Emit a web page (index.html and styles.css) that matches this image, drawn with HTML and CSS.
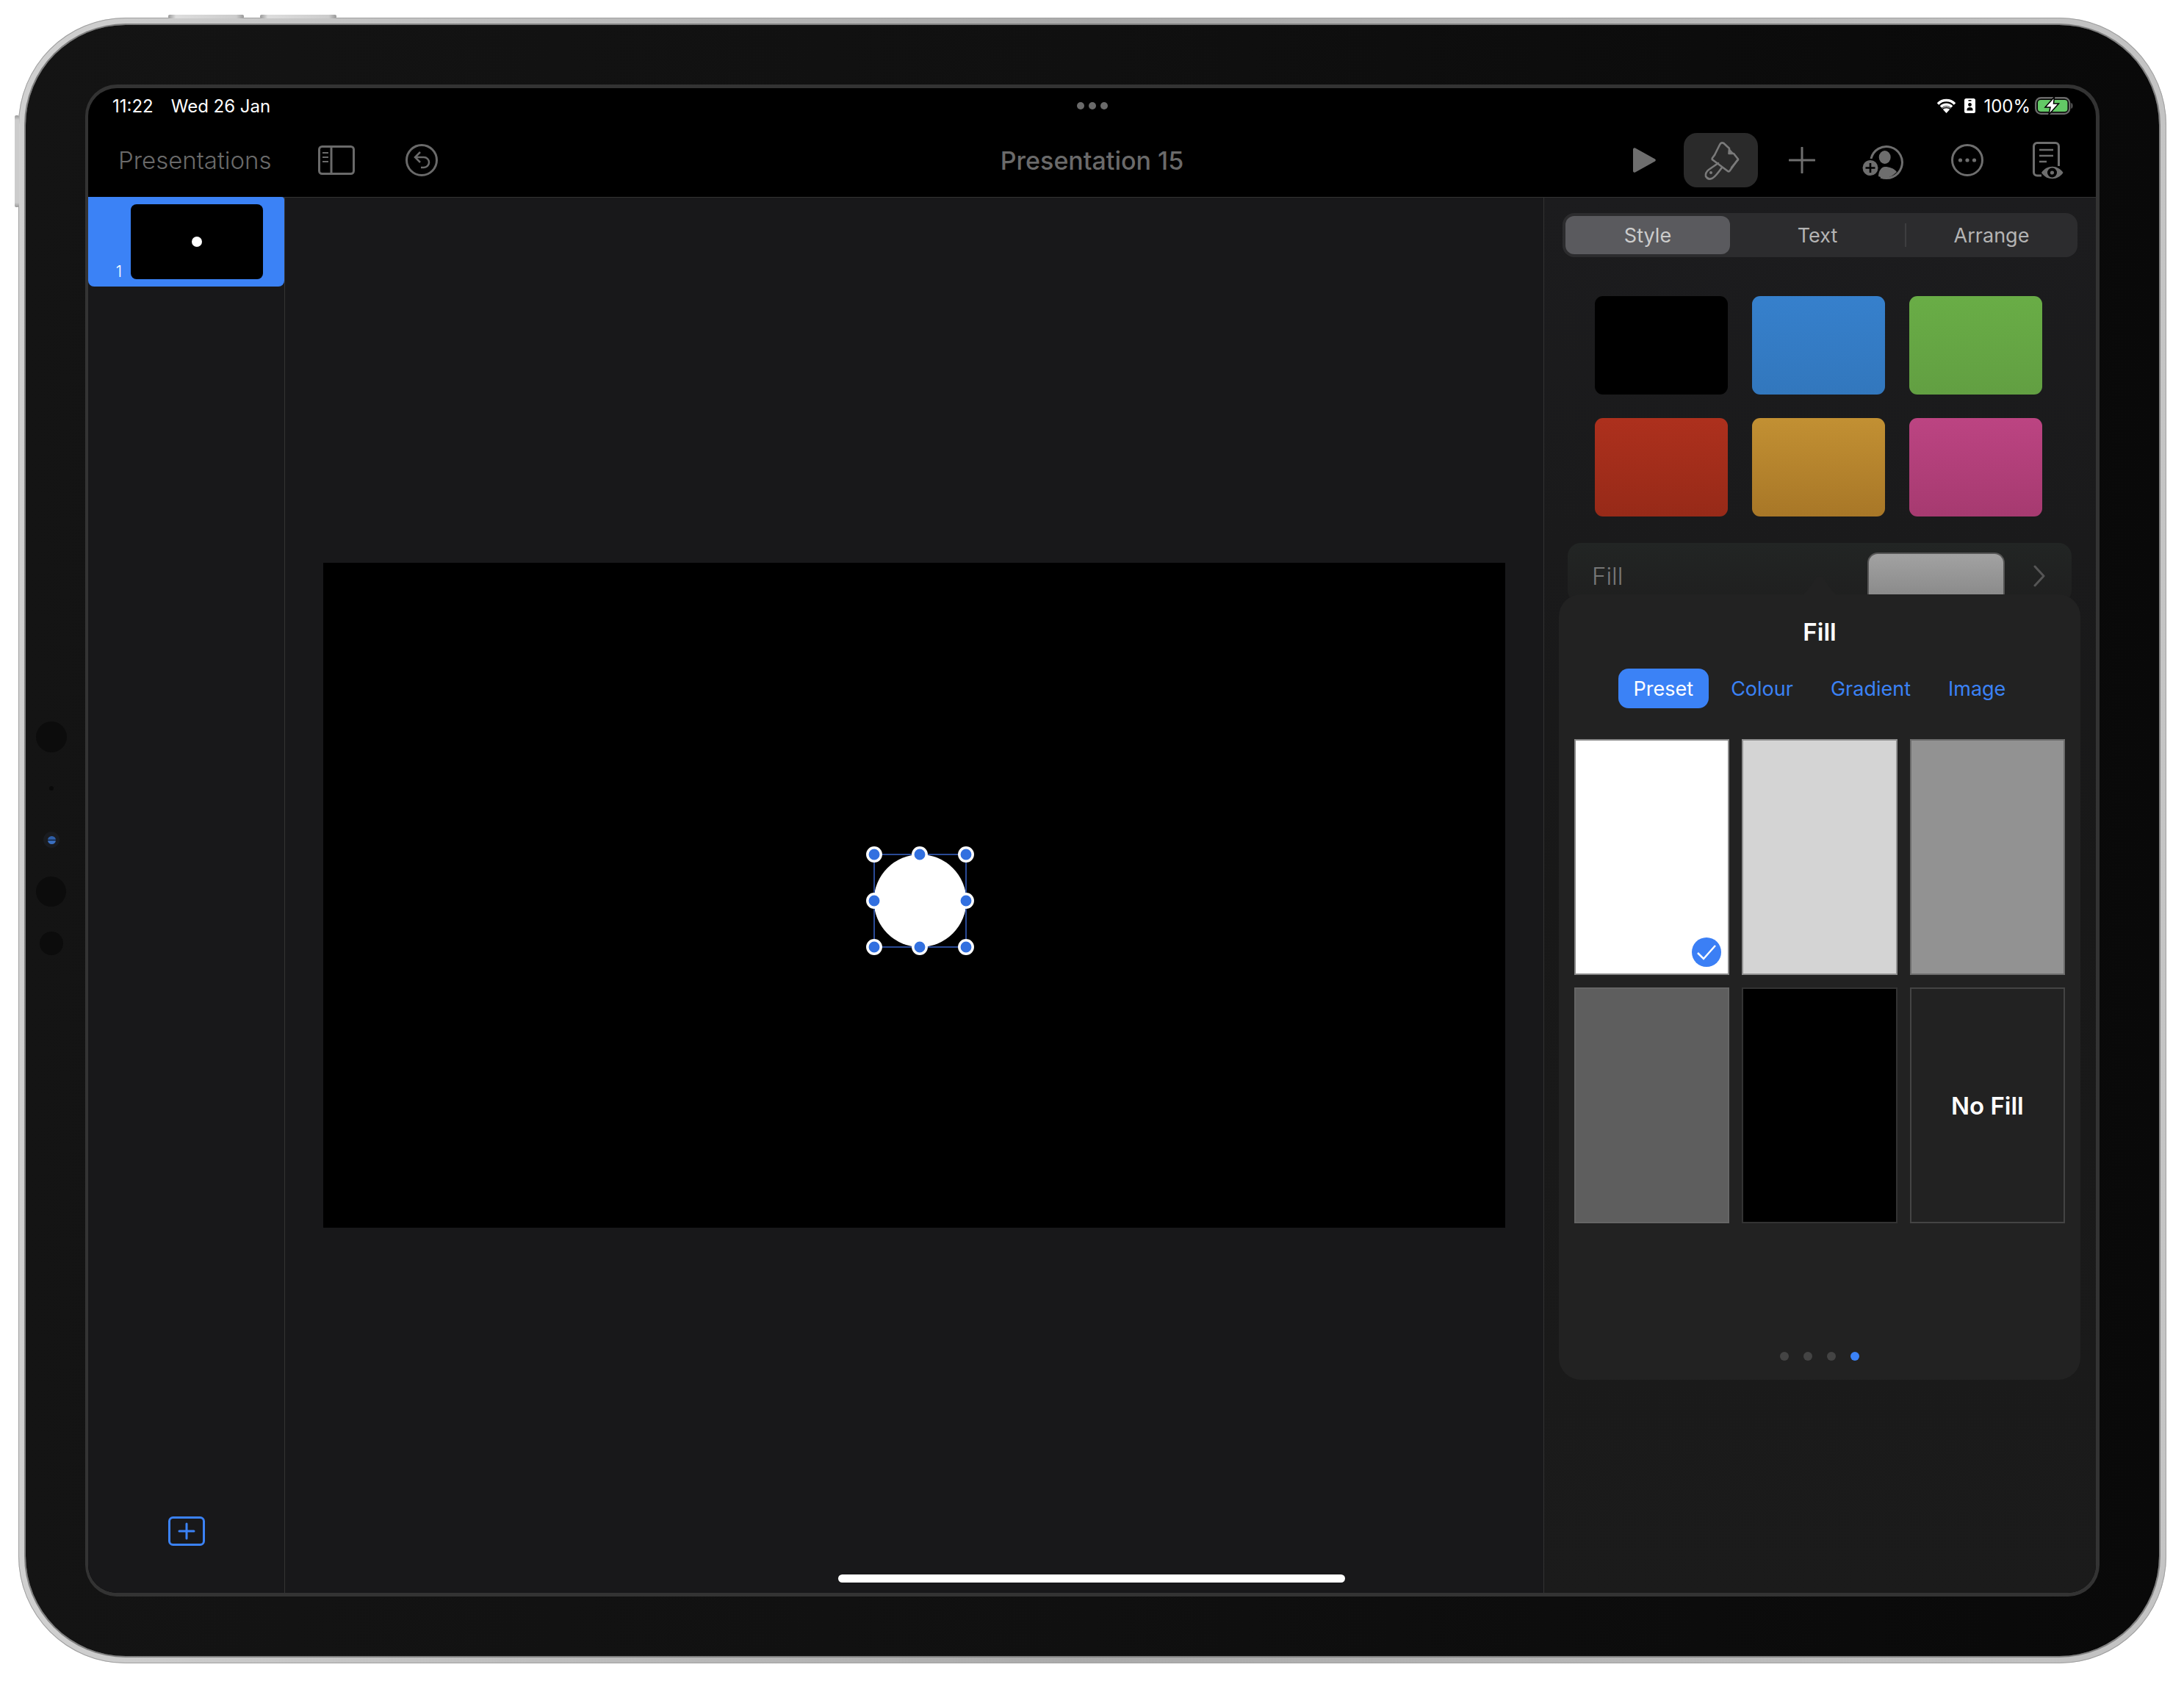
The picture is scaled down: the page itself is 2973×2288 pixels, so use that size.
FILE: index.html
```html
<!DOCTYPE html>
<html lang="en">
<head>
    <meta charset="UTF-8">
    <title>Presentation 15</title>
    <link rel="stylesheet" href="styles.css">
</head>
<body>
    <div class="device">
        <span class="hw-btn hw-top-a"></span>
        <span class="hw-btn hw-top-b"></span>
        <span class="hw-btn hw-side"></span>

        <div class="bezel">
            <span class="sensor sensor-a"></span>
            <span class="sensor sensor-mic"></span>
            <span class="sensor sensor-cam"><i></i></span>
            <span class="sensor sensor-b"></span>
            <span class="sensor sensor-c"></span>

            <div class="screen">
                <!-- status bar -->
                <div class="status">
                    <div class="status-left"><span>11:22</span><span>Wed 26 Jan</span></div>
                    <div class="status-dots"><i></i><i></i><i></i></div>
                    <div class="status-right">
                        <svg width="27" height="20" viewBox="0 0 27 20">
                            <path d="M2 7.5a16 16 0 0 1 23 0M6 11.5a10.5 10.5 0 0 1 15 0" fill="none" stroke="#fff" stroke-width="3.5"/>
                            <path d="M13.5 20l-6-6.6a8 8 0 0 1 12 0z" fill="#fff"/>
                            <path d="M7.5 13a8.5 8.5 0 0 1 12 0" fill="none" stroke="#000" stroke-width="1.5" transform="translate(0 2)"/>
                        </svg>
                        <svg class="ic-lock" width="15" height="20" viewBox="0 0 15 20">
                            <rect width="15" height="20" rx="2.5" fill="#fff"/>
                            <rect x="5.5" y="2" width="4" height="1.6" fill="#000"/>
                            <circle cx="7.5" cy="8.5" r="2.4" fill="#000"/>
                            <path d="M3.5 16.5v-1.5c0-2 2-3 4-3s4 1 4 3v1.5z" fill="#000"/>
                        </svg>
                        <span class="batt-text">100%</span>
                        <svg width="53" height="26" viewBox="0 0 53 26">
                            <rect x="1.2" y="2.2" width="46" height="21.6" rx="7" fill="none" stroke="#6a6a6a" stroke-width="2.4"/>
                            <rect x="4" y="5" width="40.5" height="16" rx="4" fill="#63c966"/>
                            <path d="M49.5 9c2.5 .6 2.5 7.4 0 8z" fill="#6a6a6a"/>
                            <path d="M26.5 1L14 15h7l-2 10 13.5-15H25.5z" fill="#fff" stroke="#000" stroke-width="1.5"/>
                        </svg>
                    </div>
                </div>

                <!-- toolbar -->
                <div class="toolbar">
                    <div class="toolbar-left">
                        <span class="back-label">Presentations</span>
                        <svg class="ic-sidebar" width="50" height="40" viewBox="0 0 50 40">
                            <rect x="1.5" y="1.5" width="47" height="37" rx="4" fill="none" stroke="#6a6a6a" stroke-width="3"/>
                            <path d="M18 2v36" stroke="#6a6a6a" stroke-width="3"/>
                            <path d="M6 10h8M6 16h8M6 22h8" stroke="#6a6a6a" stroke-width="2"/>
                        </svg>
                        <svg class="ic-undo" width="44" height="44" viewBox="0 0 44 44">
                            <circle cx="22" cy="22" r="20.5" fill="none" stroke="#6a6a6a" stroke-width="3"/>
                            <path d="M20 11l-7 7 7 7M13 18h12a7 7 0 0 1 0 14h-4" fill="none" stroke="#6a6a6a" stroke-width="2.5"/>
                        </svg>
                    </div>
                    <div class="doc-title">Presentation 15</div>
                    <div class="toolbar-right">
                        <svg class="ic-play" width="32" height="36" viewBox="0 0 32 36">
                            <path d="M3 1.5L30 16.5a2 2 0 0 1 0 3L3 34.5a2 2 0 0 1-3-1.5V3a2 2 0 0 1 3-1.5z" fill="#6e6e6e"/>
                        </svg>
                        <div class="brush-btn">
                            <svg width="66" height="66" viewBox="0 0 66 66" fill="none" stroke="#7a7a7a" stroke-width="2.6" stroke-linejoin="round" stroke-linecap="round">
                                <path d="M24 26L31 12Q33 8 36.5 10L44 17 43.5 24 50 24 55.5 31Q56.5 32 55.5 33L47 43"/>
                                <path d="M44 17l6.5 7h-7z" fill="#7a7a7a" stroke="none"/>
                                <path d="M24 26L21 30Q20 32 22 33L42 48Q44 49 45 47L55 33"/>
                                <path d="M29 37L16 46Q11 50 12 55 15 60 20 58 24 57 34 43"/>
                                <circle cx="19" cy="50" r="2" fill="#7a7a7a" stroke="none"/>
                            </svg>
                        </div>
                        <svg class="ic-plus" width="36" height="36" viewBox="0 0 36 36">
                            <path d="M18 1v34M1 18h34" stroke="#6e6e6e" stroke-width="3" stroke-linecap="round"/>
                        </svg>
                        <svg class="ic-person" width="65" height="56" viewBox="0 0 65 56">
                            <path d="M17 26A21.5 21.5 0 1 1 30 51" fill="none" stroke="#6e6e6e" stroke-width="3"/>
                            <ellipse cx="35.7" cy="24" rx="8" ry="9" fill="#6e6e6e"/>
                            <path d="M27 50c0-7 4-13 9-13 6 0 12 2 16 7-5 5-10 8-16 8-3 0-6-1-9-2z" fill="#6e6e6e"/>
                            <circle cx="16" cy="38.5" r="10.5" fill="#6e6e6e"/>
                            <path d="M16 32v13M9.5 38.5h13" stroke="#000" stroke-width="2.6"/>
                        </svg>
                        <svg class="ic-more" width="44" height="44" viewBox="0 0 44 44">
                            <circle cx="22" cy="22" r="20.5" fill="none" stroke="#6e6e6e" stroke-width="3"/>
                            <circle cx="12.5" cy="22" r="2.6" fill="#6e6e6e"/>
                            <circle cx="22" cy="22" r="2.6" fill="#6e6e6e"/>
                            <circle cx="31.5" cy="22" r="2.6" fill="#6e6e6e"/>
                        </svg>
                        <svg class="ic-doc" width="56" height="60" viewBox="0 0 56 60">
                            <path d="M19 51H13a4.5 4.5 0 0 1-4.5-4.5V11A4.5 4.5 0 0 1 13 6.5H38A4.5 4.5 0 0 1 42.5 11V38" fill="none" stroke="#6e6e6e" stroke-width="3"/>
                            <path d="M16 16h19M16 24h19M16 32h10" stroke="#6e6e6e" stroke-width="2.6"/>
                            <path d="M19 47c7-11 22-11 29.5 0-7.5 11-22.5 11-29.5 0z" fill="#6e6e6e"/>
                            <circle cx="33.5" cy="47" r="6.5" fill="#000"/>
                            <circle cx="33.5" cy="47" r="2.6" fill="#6e6e6e"/>
                        </svg>
                    </div>
                </div>

                <div class="workspace">
                    <!-- slide navigator -->
                    <div class="navigator">
                        <div class="thumb-row">
                            <span class="thumb-num">1</span>
                            <div class="thumb"><i></i></div>
                        </div>
                        <svg class="add-slide" width="50" height="40" viewBox="0 0 50 40">
                            <rect x="1.5" y="1.5" width="47" height="37" rx="5" fill="none" stroke="#3b82f6" stroke-width="3"/>
                            <path d="M25 10v20M15 20h20" stroke="#3b82f6" stroke-width="3" stroke-linecap="round"/>
                        </svg>
                    </div>

                    <!-- slide canvas -->
                    <div class="canvas">
                        <div class="slide">
                            <svg class="shape" width="147" height="148" viewBox="0 0 147 148">
                                <circle cx="73.5" cy="74" r="63" fill="#fff"/>
                                <rect x="11" y="11" width="125" height="126" fill="none" stroke="#2a4a96" stroke-width="2"/>
                                <g fill="#3270e0" stroke="#fff" stroke-width="3.5">
                                    <circle cx="11" cy="11" r="9.2"/>
                                    <circle cx="73" cy="11" r="9.2"/>
                                    <circle cx="136" cy="11" r="9.2"/>
                                    <circle cx="11" cy="74" r="9.2"/>
                                    <circle cx="136" cy="74" r="9.2"/>
                                    <circle cx="11" cy="137" r="9.2"/>
                                    <circle cx="73" cy="137" r="9.2"/>
                                    <circle cx="136" cy="137" r="9.2"/>
                                </g>
                            </svg>
                        </div>
                    </div>

                    <!-- format inspector -->
                    <div class="inspector">
                        <div class="segmented">
                            <div class="seg seg-on">Style</div>
                            <div class="seg seg-text">Text</div>
                            <div class="seg-sep"></div>
                            <div class="seg seg-arrange">Arrange</div>
                        </div>

                        <div class="styles">
                            <div class="style-swatch sw-black"></div>
                            <div class="style-swatch sw-blue"></div>
                            <div class="style-swatch sw-green"></div>
                            <div class="style-swatch sw-red"></div>
                            <div class="style-swatch sw-orange"></div>
                            <div class="style-swatch sw-pink"></div>
                        </div>

                        <div class="fill-row">
                            <span class="fill-label">Fill</span>
                            <div class="fill-preview"></div>
                            <svg class="fill-chevron" width="16" height="30" viewBox="0 0 16 30">
                                <path d="M2 2l12 13L2 28" fill="none" stroke="#555" stroke-width="3" stroke-linecap="round" stroke-linejoin="round"/>
                            </svg>
                        </div>

                        <div class="popover">
                            <svg class="popover-arrow" width="60" height="26" viewBox="0 0 60 26">
                                <path d="M0 26c6 0 9-1 12-5L25 3c3-4 7-4 10 0l13 18c3 4 6 5 12 5z" fill="#222"/>
                            </svg>
                            <div class="popover-title">Fill</div>
                            <div class="tabs">
                                <span class="tab tab-on">Preset</span>
                                <span class="tab">Colour</span>
                                <span class="tab">Gradient</span>
                                <span class="tab">Image</span>
                            </div>
                            <div class="presets">
                                <div class="preset p-white">
                                    <svg class="check" width="40" height="40" viewBox="0 0 40 40">
                                        <circle cx="20" cy="20" r="20" fill="#3b7ff5"/>
                                        <path d="M8 21l8 8 16-18" fill="none" stroke="#fff" stroke-width="2.5"/>
                                    </svg>
                                </div>
                                <div class="preset p-light"></div>
                                <div class="preset p-mid"></div>
                                <div class="preset p-dark"></div>
                                <div class="preset p-black"></div>
                                <div class="preset p-none">No Fill</div>
                            </div>
                            <div class="pager"><i></i><i></i><i></i><i class="on"></i></div>
                        </div>
                    </div>
                </div>

                <div class="home-bar"></div>
            </div>
        </div>
    </div>
</body>
</html>
```

FILE: styles.css
```css
* {
    box-sizing: border-box;
}

body {
    margin: 0;
    width: 2973px;
    height: 2288px;
    background-color: #fff;
    font-family: Inter, 'Liberation Sans', sans-serif;
    overflow: hidden;
}

/* device frame */
.device {
    position: relative;
    width: 2924px;
    height: 2240px;
    margin: 24px 0 0 25px;
    padding: 10px;
    border-radius: 146px;
    background: linear-gradient(90deg, #d0d0d0, #aaa 50%, #c4c4c4);
    box-shadow: inset 0 0 0 1px #a0a0a0;
}

.hw-btn {
    position: absolute;
    background: linear-gradient(90deg, #999, #ddd 10%, #ccc 90%, #999);
    border-radius: 2px;
}

.hw-top-a {
    left: 204px;
    top: -4px;
    width: 103px;
    height: 5px;
}

.hw-top-b {
    left: 329px;
    top: -4px;
    width: 104px;
    height: 5px;
}

.hw-side {
    left: -5px;
    top: 133px;
    width: 6px;
    height: 125px;
    background: linear-gradient(180deg, #999, #ccc 5%, #ccc 95%, #999);
}

.bezel {
    position: relative;
    height: 100%;
    padding: 81px;
    border-radius: 136px;
    background: linear-gradient(90deg, #141414, #101010 50%, #090909);
    box-shadow: 0 0 0 2px #808080;
}

.sensor {
    position: absolute;
    border-radius: 50%;
    background-color: #0c0c0c;
}

.sensor-a {
    left: 14px;
    top: 948px;
    width: 42px;
    height: 42px;
}

.sensor-mic {
    left: 32px;
    top: 1036px;
    width: 6px;
    height: 6px;
    background-color: #0a0a0a;
}

.sensor-cam {
    left: 24px;
    top: 1098px;
    width: 22px;
    height: 22px;
    background-color: #1a1c20;
    display: flex;
    align-items: center;
    justify-content: center;
}

.sensor-cam i {
    width: 11px;
    height: 11px;
    border-radius: 50%;
    background: linear-gradient(180deg, #2f5fa8 40%, #0d1a30 45%, #0d1a30 55%, #3a6fc0 60%);
}

.sensor-b {
    left: 14px;
    top: 1159px;
    width: 41px;
    height: 41px;
}

.sensor-c {
    left: 19px;
    top: 1234px;
    width: 32px;
    height: 32px;
}

.screen {
    position: relative;
    height: 100%;
    display: flex;
    flex-direction: column;
    border: 5px solid #333;
    border-left-width: 4px;
    border-radius: 43px;
    overflow: hidden;
    background-color: #000;
}

/* status bar */
.status {
    height: 48px;
    flex: none;
    display: grid;
    grid-template-columns: 1fr auto 1fr;
    align-items: center;
    padding: 0 30px;
    color: #fff;
    font-size: 24px;
}

.status-left {
    display: flex;
    gap: 24px;
    margin-left: 3px;
}

.status-dots {
    display: flex;
    gap: 6px;
}

.status-dots i {
    width: 10px;
    height: 10px;
    border-radius: 50%;
    background-color: #6a6a6a;
}

.status-right {
    display: flex;
    align-items: center;
    justify-content: flex-end;
}

.ic-lock {
    margin-left: 11px;
}

.batt-text {
    margin-left: 11px;
    margin-right: 6px;
}

/* toolbar */
.toolbar {
    height: 101px;
    flex: none;
    display: grid;
    grid-template-columns: 1fr auto 1fr;
    align-items: center;
    padding: 0 37px;
    border-bottom: 1px solid #333;
    color: #6a6a6a;
    font-size: 34px;
}

.toolbar-left,
.toolbar-right {
    display: flex;
    align-items: center;
}

.toolbar-left {
    padding-left: 4px;
}

.toolbar-right {
    justify-content: flex-end;
}

.back-label {
    font-size: 33px;
    font-weight: 300;
}

.ic-sidebar {
    margin-left: 64px;
}

.ic-undo {
    margin-left: 69px;
}

.doc-title {
    font-weight: 500;
}

.brush-btn {
    width: 101px;
    height: 74px;
    margin-left: 37px;
    border-radius: 18px;
    background-color: #2a2a2a;
    display: flex;
    align-items: center;
    justify-content: center;
}

.ic-plus {
    margin-left: 42px;
}

.ic-person {
    margin-left: 59px;
}

.ic-more {
    margin-left: 61px;
}

.ic-doc {
    margin-left: 60px;
}

/* main area */
.workspace {
    flex: 1;
    min-height: 0;
    display: flex;
}

.navigator {
    width: 268px;
    flex: none;
    display: flex;
    flex-direction: column;
    align-items: center;
    border-right: 1px solid #333;
    background-color: #18181a;
}

.thumb-row {
    width: 267px;
    height: 122px;
    margin-top: -1px;
    flex: none;
    display: flex;
    align-items: flex-end;
    justify-content: flex-end;
    padding: 10px 29px;
    border-radius: 0 4px 8px 8px;
    background-color: #3b82f6;
}

.thumb-num {
    margin-right: 12px;
    color: #fff;
    font-size: 21px;
    font-weight: 300;
    line-height: 20px;
}

.thumb {
    width: 180px;
    height: 102px;
    border-radius: 8px;
    background-color: #000;
    display: flex;
    align-items: center;
    justify-content: center;
}

.thumb i {
    width: 14px;
    height: 14px;
    border-radius: 50%;
    background-color: #fff;
}

.add-slide {
    margin-top: auto;
    margin-bottom: 64px;
}

.canvas {
    flex: 1;
    display: flex;
    align-items: center;
    justify-content: center;
    background-color: #18181a;
}

.slide {
    position: relative;
    width: 1609px;
    height: 905px;
    background-color: #000;
}

.shape {
    position: absolute;
    left: 739px;
    top: 386px;
}

/* inspector */
.inspector {
    position: relative;
    width: 752px;
    flex: none;
    padding: 21px 25px 0 25px;
    border-left: 1px solid #333;
    background: linear-gradient(180deg, #1c1c1e, #181818 50%, #1b1b1b);
}

.segmented {
    height: 60px;
    display: flex;
    align-items: center;
    padding: 4px;
    border-radius: 16px;
    background-color: #2c2c2e;
    color: #b4b4b4;
    font-size: 27px;
}

.seg {
    height: 52px;
    display: flex;
    align-items: center;
    justify-content: center;
    border-radius: 12px;
}

.seg-on {
    width: 224px;
    background-color: #5a5a5e;
    color: #ccc;
}

.seg-text {
    width: 238px;
}

.seg-arrange {
    flex: 1;
    padding-left: 3px;
}

.seg-sep {
    width: 2px;
    height: 32px;
    background-color: #3e3e40;
}

.styles {
    display: grid;
    grid-template-columns: repeat(3, 181px);
    grid-auto-rows: 134px;
    column-gap: 33px;
    row-gap: 32px;
    margin: 53px 0 36px 44px;
}

.style-swatch {
    border-radius: 11px;
}

.sw-black {
    background-color: #000;
}

.sw-blue {
    background: linear-gradient(180deg, #3680cc, #3277bd);
}

.sw-green {
    background: linear-gradient(180deg, #69ad46, #629f42);
}

.sw-red {
    background: linear-gradient(180deg, #ad301d, #972a18);
}

.sw-orange {
    background: linear-gradient(180deg, #c29033, #a87727);
}

.sw-pink {
    background: linear-gradient(180deg, #bc4482, #a63a70);
}

.fill-row {
    width: 686px;
    height: 82px;
    margin-left: 7px;
    display: flex;
    align-items: flex-start;
    border-radius: 18px;
    background: linear-gradient(180deg, #222524, #1f1f1f);
}

.fill-label {
    margin: 25px 0 0 33px;
    color: #777;
    font-size: 33px;
    line-height: 40px;
    font-weight: 300;
}

.fill-preview {
    width: 187px;
    height: 70px;
    margin: 13px 0 0 332px;
    border: 2px solid #555;
    border-radius: 14px;
    background: linear-gradient(180deg, #a2a2a2, #8c8c8c 80%);
}

.fill-chevron {
    margin: 30px 0 0 39px;
}

.popover {
    position: absolute;
    left: 20px;
    top: 540px;
    width: 710px;
    height: 1069px;
    display: flex;
    flex-direction: column;
    align-items: center;
    padding: 0 21px 26px;
    border-radius: 30px;
    background-color: #222;
}

.popover-arrow {
    position: absolute;
    left: 325px;
    top: -25px;
}

.popover-title {
    margin-top: 31px;
    height: 40px;
    color: #fff;
    font-size: 33px;
    font-weight: 600;
    line-height: 40px;
}

.tabs {
    display: flex;
    gap: 9px;
    margin-top: 30px;
}

.tab {
    height: 54px;
    display: flex;
    align-items: center;
    padding: 0 21px;
    border-radius: 14px;
    color: #3b82f6;
    font-size: 27px;
}

.tab-on {
    background-color: #3b82f6;
    color: #fff;
}

.presets {
    width: 668px;
    display: grid;
    grid-template-columns: repeat(3, 1fr);
    grid-auto-rows: 321px;
    column-gap: 17px;
    row-gap: 17px;
    margin-top: 42px;
}

.preset {
    position: relative;
    border: 2px solid #888;
}

.p-white {
    background-color: #fff;
}

.p-light {
    background-color: #d4d4d4;
    border-color: #909090;
}

.p-mid {
    background-color: #929292;
    border-color: #6c6c6c;
}

.p-dark {
    background-color: #5e5e5e;
    border-color: #666;
}

.p-black {
    background-color: #000;
    border-color: #333;
}

.p-none {
    display: flex;
    align-items: center;
    justify-content: center;
    border-color: #444;
    color: #fff;
    font-size: 33px;
    font-weight: 600;
}

.check {
    position: absolute;
    right: 9px;
    bottom: 9px;
}

.pager {
    display: flex;
    gap: 20px;
    margin-top: auto;
}

.pager i {
    width: 12px;
    height: 12px;
    border-radius: 50%;
    background-color: #444;
}

.pager i.on {
    background-color: #3b82f6;
}

.home-bar {
    position: absolute;
    left: 1021px;
    bottom: 14px;
    width: 690px;
    height: 11px;
    border-radius: 6px;
    background-color: #fff;
}
```
